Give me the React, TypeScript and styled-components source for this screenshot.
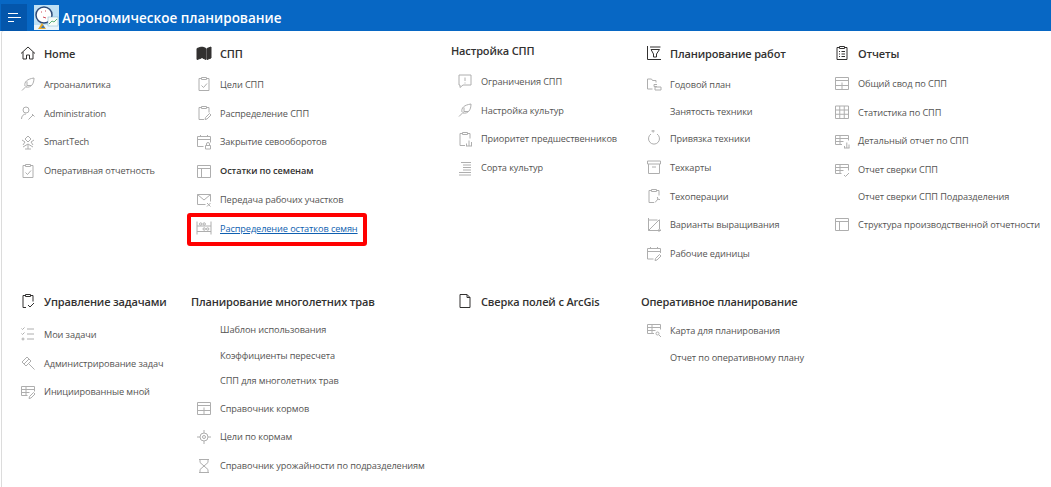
import React from "react";
import styled, { createGlobalStyle } from "styled-components";

const GlobalStyle = createGlobalStyle`
  html, body {
    margin: 0;
    padding: 0;
    background: #ffffff;
    font-family: "Open Sans", "Noto Sans", sans-serif;
    overflow: hidden;
  }
`;

const Page = styled.div`
  width: 1051px;
  height: 487px;
  overflow: hidden;
`;

const Header = styled.header`
  height: 31px;
  background: #0767c4;
  display: flex;
  align-items: flex-end;
  padding-left: 1px;
  box-sizing: border-box;
`;

const MenuButton = styled.div`
  width: 26px;
  height: 27px;
  background: #0456ab;
  display: flex;
  flex-direction: column;
  justify-content: center;
  padding-left: 7px;
  gap: 3px;
  box-sizing: border-box;
`;

const MenuLine = styled.span<{ $w: number }>`
  display: block;
  height: 1px;
  width: ${(p) => p.$w}px;
  background: #ffffff;
`;

const Logo = styled.svg`
  margin: 0 3px 1px 7px;
  flex: none;
`;

const AppTitle = styled.h1`
  margin: 0 0 3px;
  color: #ffffff;
  font-size: 13.5px;
  font-weight: 600;
  line-height: 20px;
  white-space: nowrap;
`;

const Panel = styled.main`
  margin-left: 2px;
  padding: 7px 0 0 12px;
  height: 456px;
  box-sizing: border-box;
  border-top-left-radius: 2px;
  box-shadow: -1px 0 0 #dcdcdc;
  background: #ffffff;
`;

const MenuRow = styled.div<{ $h: number }>`
  display: grid;
  grid-template-columns: 177px 260px 190px 188px 1fr;
  height: ${(p) => p.$h}px;
`;

const Column = styled.section<{ $raised?: boolean }>`
  margin-top: ${(p) => (p.$raised ? "-3px" : "0")};
`;

const GroupTitle = styled.div<{ $hasIcon?: boolean; $inset?: boolean; $gap: number }>`
  display: flex;
  align-items: center;
  height: 30px;
  margin-bottom: ${(p) => p.$gap}px;
  padding-left: ${(p) => (!p.$hasIcon ? "0" : p.$inset ? "6px" : "5px")};
  color: #323130;
  font-size: 11px;
  letter-spacing: -0.15px;
  font-weight: 600;
  white-space: nowrap;
`;

const TitleIcon = styled.span`
  display: flex;
  width: 24px;
  flex: none;
`;

const Item = styled.div<{ $plain?: boolean; $inset?: boolean }>`
  position: relative;
  display: flex;
  align-items: center;
  height: ${(p) => (p.$plain ? "25.6px" : "28.8px")};
  padding-left: ${(p) => (p.$plain ? "29px" : p.$inset ? "6px" : "5px")};
  color: #555453;
  font-size: 9.2px;
  letter-spacing: -0.1px;
  white-space: nowrap;
`;

const ItemIcon = styled.span`
  display: flex;
  width: 24px;
  flex: none;
`;

const ItemText = styled.span<{ $bold?: boolean; $link?: boolean }>`
  font-weight: ${(p) => (p.$bold ? 600 : 400)};
  color: ${(p) => (p.$link ? "#0f5fb0" : p.$bold ? "#323130" : "inherit")};
  text-decoration: ${(p) => (p.$link ? "underline" : "none")};
`;

const Highlight = styled.span`
  position: absolute;
  left: -4px;
  top: -1px;
  width: 180px;
  height: 33px;
  box-sizing: border-box;
  border: 4px solid #ff0000;
  border-radius: 3px;
`;

const Glyph = styled.svg<{ $dark?: boolean }>`
  width: 16px;
  height: 16px;
  fill: none;
  stroke: ${(p) => (p.$dark ? "#323130" : "#aeaeae")};
  stroke-width: 1;
`;

const icons: Record<string, React.ReactNode> = {
  home: <path d="M1 8.5 8 2l7 6.5M3 7v7h3.5v-4h3v4H13V7" />,
  map: <path d="M1 3.5 5.5 2v11L1 14.5zM6.5 2 10 3.5v11L6.5 13zM11 3.5 15 2v11l-4 1.5z" fill="#323130" />,
  funnel: <path d="M1.5 1v13.5H15M4 2h10.5M5 4.5h8.5L10.5 9v3h-3V9z" />,
  report: <path d="M5 2.5H3v12h10v-12h-2M5.5 1.5h5v2h-5zM5 6.5h1M7.5 6.5H11M5 9h1M7.5 9H11M5 11.5h1M7.5 11.5H11" />,
  clipCheck: <path d="M5 2.5H3v12h3M11 2.5h2v6M5.5 1.5h5v2h-5zM8 12l2 2 4-4" />,
  doc: <path d="M3 1.5h7l3 3v10H3zM10 1.5v3h3" />,
  leaf: <path d="M2 14.5 7 9.5M5 10c-1-4 2-7 9-8 0 6-3 10-8 9M7 5.5v4h4" />,
  userTool: <path d="M6 8a3 3 0 1 0 0-6 3 3 0 0 0 0 6zM1.5 14c0-3 2-5 4.5-5M8.5 14.5 13 10M12 9l2.5 2.5" />,
  smart: <path d="M8 2 5 5l3 3 3-3zM2 6l3 2-2 3M14 6l-3 2 2 3M3 13l5-3 5 3M8 10v5M5 15h6" />,
  clipEdit: <path d="M5 2.5H3v12h5M11 2.5h2v5M5.5 1.5h5v2h-5zM9 14.5l.5-2 4-4 1.5 1.5-4 4z" />,
  clipOk: <path d="M5 2.5H3v12h10v-12h-2M5.5 1.5h5v2h-5zM5.5 9.5l2 2 3.5-4" />,
  calLock: <path d="M1.5 12.5v-10h13v6M1.5 5.5h13M4.5 1v2M11.5 1v2M1.5 12.5h6M9.5 11.5h5V15h-5zM10.5 11.5V10a1.5 1.5 0 0 1 3 0v1.5" />,
  layout: <path d="M1.5 2.5h13v12h-13zM1.5 5.5h13M5.5 5.5v9" />,
  mailX: <path d="M1.5 2.5h13v7M1.5 2.5v10h8M1.5 2.5 8 8l6.5-5.5M11 11l3.5 3.5M14.5 11 11 14.5" />,
  seed: <path d="M1 1.5v13M15 1.5v13M1 6h14M1 11.5h14M3.5 4a1.2 1.2 0 1 0 2.4 0 1.2 1.2 0 0 0-2.4 0zM7 4a1.2 1.2 0 1 0 2.4 0A1.2 1.2 0 0 0 7 4zM7 9a1.2 1.2 0 1 0 2.4 0A1.2 1.2 0 0 0 7 9zM10.5 9a1.2 1.2 0 1 0 2.4 0 1.2 1.2 0 0 0-2.4 0z" />,
  comment: <path d="M2 2h12v10H6l-3 2.5V12H2zM8 4.5V8M8 9.5v1" />,
  clipChart: <path d="M5 2.5H3v12h5M11 2.5h2v5M5.5 1.5h5v2h-5zM9.5 15v-2.5M12 15V9.5M14.5 15v-4M9 15h6" />,
  lines: <path d="M4 2.5h10M6 5h8M6 7.5h8M6 10h8M2 12.5h12M2 15h12" />,
  yearPlan: <path d="M1.5 3h4l1 1.5H10v2M1.5 3v10h5M8 8.5h3M8 8.5v2h3M9 11h6v3H9z" />,
  ring: <path d="M5 4a5.5 5.5 0 1 0 6 0M8 1a1 1 0 1 0 0 .01" />,
  archive: <path d="M1.5 2h13v3h-13zM2.5 5v9.5h11V5M6 8h4" />,
  clipWrench: <path d="M5 2.5H3v12h5M11 2.5h2v5M5.5 1.5h5v2h-5zM9 14.5l3-3.5M11.5 9a2 2 0 0 0 2.5 2.5" />,
  crop: <path d="M2.5 1v12.5H15M2.5 13.5l11-11M2.5 3h9M13.5 3v9M13 12.5V15M15 13h-3" />,
  calEdit: <path d="M1.5 13V2.5h13V7M1.5 5.5h13M4.5 1v2M11.5 1v2M1.5 13h6M9 14.5l.5-2 4-4 1.5 1.5-4 4z" />,
  tableHead: <path d="M1.5 2.5h13v12h-13zM1.5 5.5h13M8 7.5v7M1.5 10.5h13" />,
  grid: <path d="M1.5 2h13v12.5h-13zM1.5 6h13M1.5 10.25h13M5.75 2v12.5M10.25 2v12.5" />,
  tableChart: <path d="M8 11.5H1.5v-9h13v5M1.5 5.5h13M1.5 8.5h8M6 2.5v9M10.5 15v-2M12.8 15V9.5M15 15v-3.5M10 15h5.5" />,
  tableCheck: <path d="M7.5 11.5h-6v-9h13v6M1.5 5.5h13M1.5 8.5h8M6 2.5v9M10 13l1.5 1.5L15 11" />,
  tableEdit: <path d="M7.5 11.5h-6v-9h13v5M1.5 5.5h13M1.5 8.5h8M6 2.5v9M9 14.5l.5-2 4-4 1.5 1.5-4 4z" />,
  tableSearch: <path d="M8 11.5H1.5v-9h13v5M1.5 5.5h13M1.5 8.5h8M6 2.5v9M11.5 13a1.5 1.5 0 1 0 0-3 1.5 1.5 0 0 0 0 3zM13 13l2 2" />,
  tasks: <path d="M1.5 2.5l1 1 2-2M7 3h7M1.5 7.5l1 1 2-2M7 8h7M2 13a1 1 0 1 0 2 0 1 1 0 0 0-2 0zM7 13h7" />,
  gavel: <path d="M2 7l5-5 4 4-5 5zM8.5 8.5l6 6M4 9l5-5" />,
  target: <path d="M8 4a4 4 0 1 0 0 8 4 4 0 0 0 0-8zM8 6.5a1.5 1.5 0 1 0 0 3 1.5 1.5 0 0 0 0-3zM8 1v3M8 12v3M1 8h3M12 8h3" />,
  hourglass: <path d="M3 1.5h10M3 14.5h10M4 1.5v3L8 8l-4 3.5v3M12 1.5v3L8 8l4 3.5v3" />,
};

type MenuItem = { label: string; icon?: string; bold?: boolean; link?: boolean; marked?: boolean };
type Group = { title: string; icon?: string; raised?: boolean; inset?: boolean; gap: number; items: MenuItem[] };

const topGroups: Group[] = [
  {
    title: "Home",
    icon: "home",
    inset: true,
    gap: 2,
    items: [
      { label: "Агроаналитика", icon: "leaf" },
      { label: "Administration", icon: "userTool" },
      { label: "SmartTech", icon: "smart" },
      { label: "Оперативная отчетность", icon: "clipOk" },
    ],
  },
  {
    title: "СПП",
    icon: "map",
    gap: 2,
    items: [
      { label: "Цели СПП", icon: "clipOk" },
      { label: "Распределение СПП", icon: "clipEdit" },
      { label: "Закрытие севооборотов", icon: "calLock" },
      { label: "Остатки по семенам", icon: "layout", bold: true },
      { label: "Передача рабочих участков", icon: "mailX" },
      { label: "Распределение остатков семян", icon: "seed", link: true, marked: true },
    ],
  },
  {
    title: "Настройка СПП",
    raised: true,
    inset: true,
    gap: 2,
    items: [
      { label: "Ограничения СПП", icon: "comment" },
      { label: "Настройка культур", icon: "leaf" },
      { label: "Приоритет предшественников", icon: "clipChart" },
      { label: "Сорта культур", icon: "lines" },
    ],
  },
  {
    title: "Планирование работ",
    icon: "funnel",
    gap: 1.7,
    items: [
      { label: "Годовой план", icon: "yearPlan" },
      { label: "Занятость техники" },
      { label: "Привязка техники", icon: "ring" },
      { label: "Техкарты", icon: "archive" },
      { label: "Техоперации", icon: "clipWrench" },
      { label: "Варианты выращивания", icon: "crop" },
      { label: "Рабочие единицы", icon: "calEdit" },
    ],
  },
  {
    title: "Отчеты",
    icon: "report",
    gap: 1,
    items: [
      { label: "Общий свод по СПП", icon: "tableHead" },
      { label: "Статистика по СПП", icon: "grid" },
      { label: "Детальный отчет по СПП", icon: "tableChart" },
      { label: "Отчет сверки СПП", icon: "tableCheck" },
      { label: "Отчет сверки СПП Подразделения" },
      { label: "Структура производственной отчетности", icon: "layout" },
    ],
  },
];

const bottomGroups: Group[] = [
  {
    title: "Управление задачами",
    icon: "clipCheck",
    inset: true,
    gap: 4,
    items: [
      { label: "Мои задачи", icon: "tasks" },
      { label: "Администрирование задач", icon: "gavel" },
      { label: "Инициированные мной", icon: "tableEdit" },
    ],
  },
  {
    title: "Планирование многолетних трав",
    gap: 1,
    items: [
      { label: "Шаблон использования" },
      { label: "Коэффициенты пересчета" },
      { label: "СПП для многолетних трав" },
      { label: "Справочник кормов", icon: "tableHead" },
      { label: "Цели по кормам", icon: "target" },
      { label: "Справочник урожайности по подразделениям", icon: "hourglass" },
    ],
  },
  { title: "Сверка полей с ArcGis", icon: "doc", inset: true, gap: 0, items: [] },
  {
    title: "Оперативное планирование",
    gap: 0,
    items: [
      { label: "Карта для планирования", icon: "tableSearch" },
      { label: "Отчет по оперативному плану" },
    ],
  },
];

const MenuGroup: React.FC<{ group: Group }> = ({ group }) => (
  <Column $raised={group.raised}>
    <GroupTitle $hasIcon={!!group.icon} $inset={group.inset} $gap={group.gap}>
      {group.icon && (
        <TitleIcon>
          <Glyph $dark viewBox="0 0 16 16">
            {icons[group.icon]}
          </Glyph>
        </TitleIcon>
      )}
      {group.title}
    </GroupTitle>
    {group.items.map((item) => (
      <Item key={item.label} $plain={!item.icon} $inset={group.inset}>
        {item.icon && (
          <ItemIcon>
            <Glyph viewBox="0 0 16 16">{icons[item.icon]}</Glyph>
          </ItemIcon>
        )}
        <ItemText $bold={item.bold} $link={item.link}>
          {item.label}
        </ItemText>
        {item.marked && <Highlight />}
      </Item>
    ))}
  </Column>
);

const App: React.FC = () => {
  return (
    <Page>
      <GlobalStyle />
      <Header>
        <MenuButton>
          <MenuLine $w={10} />
          <MenuLine $w={13} />
          <MenuLine $w={6} />
        </MenuButton>
        <Logo width="25" height="25" viewBox="0 0 25 25">
          <rect width="25" height="25" fill="#bfe0f4" />
          <rect y="20" width="25" height="5" fill="#e8f4fb" />
          <circle cx="10" cy="10" r="8" fill="#ffffff" stroke="#2d4a78" strokeWidth="1.5" />
          <path d="M7 7h1M11 6h1M9 12l3 1" stroke="#d04a5a" fill="none" />
          <rect x="14" y="12" width="10" height="9" fill="#f6fbf7" stroke="#7fb0d0" strokeWidth="0.5" />
          <path d="M15 19l3-3 2 1 3-3" stroke="#5bb07a" fill="none" />
          <path d="M4 24l4-6 4 6z" fill="#e6a92b" />
          <path d="M7 23l2-3 2 3z" fill="#3a76b8" />
        </Logo>
        <AppTitle>Агрономическое планирование</AppTitle>
      </Header>
      <Panel>
        <MenuRow $h={248}>
          {topGroups.map((group) => (
            <MenuGroup key={group.title} group={group} />
          ))}
        </MenuRow>
        <MenuRow $h={200}>
          {bottomGroups.map((group) => (
            <MenuGroup key={group.title} group={group} />
          ))}
        </MenuRow>
      </Panel>
    </Page>
  );
};

export default App;
